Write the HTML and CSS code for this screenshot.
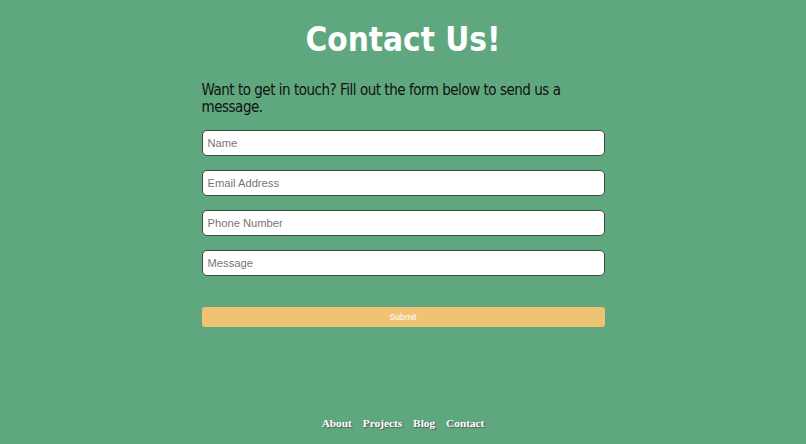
FILE: index.html
```html
<!DOCTYPE html>
<html lang="en">
<head>
<meta charset="utf-8">
<title>Contact Us</title>
<link rel="stylesheet" href="styles.css">
</head>
<body>
<main class="page">
  <h1 class="title">Contact Us!</h1>
  <section class="content">
    <p class="intro">Want to get in touch? Fill out the form below to send us a message.</p>
    <form class="form">
      <input class="field" type="text" placeholder="Name">
      <input class="field" type="email" placeholder="Email Address">
      <input class="field" type="tel" placeholder="Phone Number">
      <input class="field" type="text" placeholder="Message">
      <button class="submit" type="button">Submit</button>
    </form>
  </section>
</main>
<footer class="footer">
  <a class="nav-link" href="#">About</a>
  <a class="nav-link" href="#">Projects</a>
  <a class="nav-link" href="#">Blog</a>
  <a class="nav-link" href="#">Contact</a>
</footer>
</body>
</html>
```
FILE: styles.css
```css
html, body {
  margin: 0;
  padding: 0;
}
body {
  background: #5fa87f;
  min-height: 100vh;
  display: flex;
  flex-direction: column;
  font-family: "DejaVu Sans Condensed", "DejaVu Sans", sans-serif;
  color: #000;
}
.page {
  flex: 1;
  display: flex;
  flex-direction: column;
  align-items: center;
  padding-top: 20px;
}
.title {
  margin: 0;
  color: #fff;
  font-size: 33px;
  font-weight: bold;
  line-height: 40px;
}
.content {
  width: 403px;
  margin-top: 22px;
}
.intro {
  margin: 0;
  font-size: 15px;
  letter-spacing: -0.48px;
  line-height: 17px;
  color: #111;
}
.form {
  display: flex;
  flex-direction: column;
  margin-top: 14px;
}
.field {
  box-sizing: border-box;
  height: 26px;
  margin: 0 0 14px 0;
  padding: 0 5px;
  border: 1.5px solid #3d4a42;
  border-radius: 5px;
  background: #fff;
  font-family: "Liberation Sans", Arial, sans-serif;
  font-size: 11.2px;
  color: #333;
  outline: none;
}
.field::placeholder {
  color: #767676;
}
.submit {
  margin-top: 17px;
  height: 20px;
  border: none;
  border-radius: 3px;
  background: #f0c274;
  color: #fff;
  font-family: "Liberation Sans", Arial, sans-serif;
  font-size: 8.7px;
  padding: 0;
}
.footer {
  display: flex;
  justify-content: center;
  gap: 11px;
  padding-bottom: 15px;
}
.nav-link {
  color: #fff;
  text-decoration: none;
  font-family: "Liberation Serif", "Times New Roman", serif;
  font-weight: bold;
  font-size: 11.3px;
  text-shadow: 1px 1px 1px #555;
}
```
